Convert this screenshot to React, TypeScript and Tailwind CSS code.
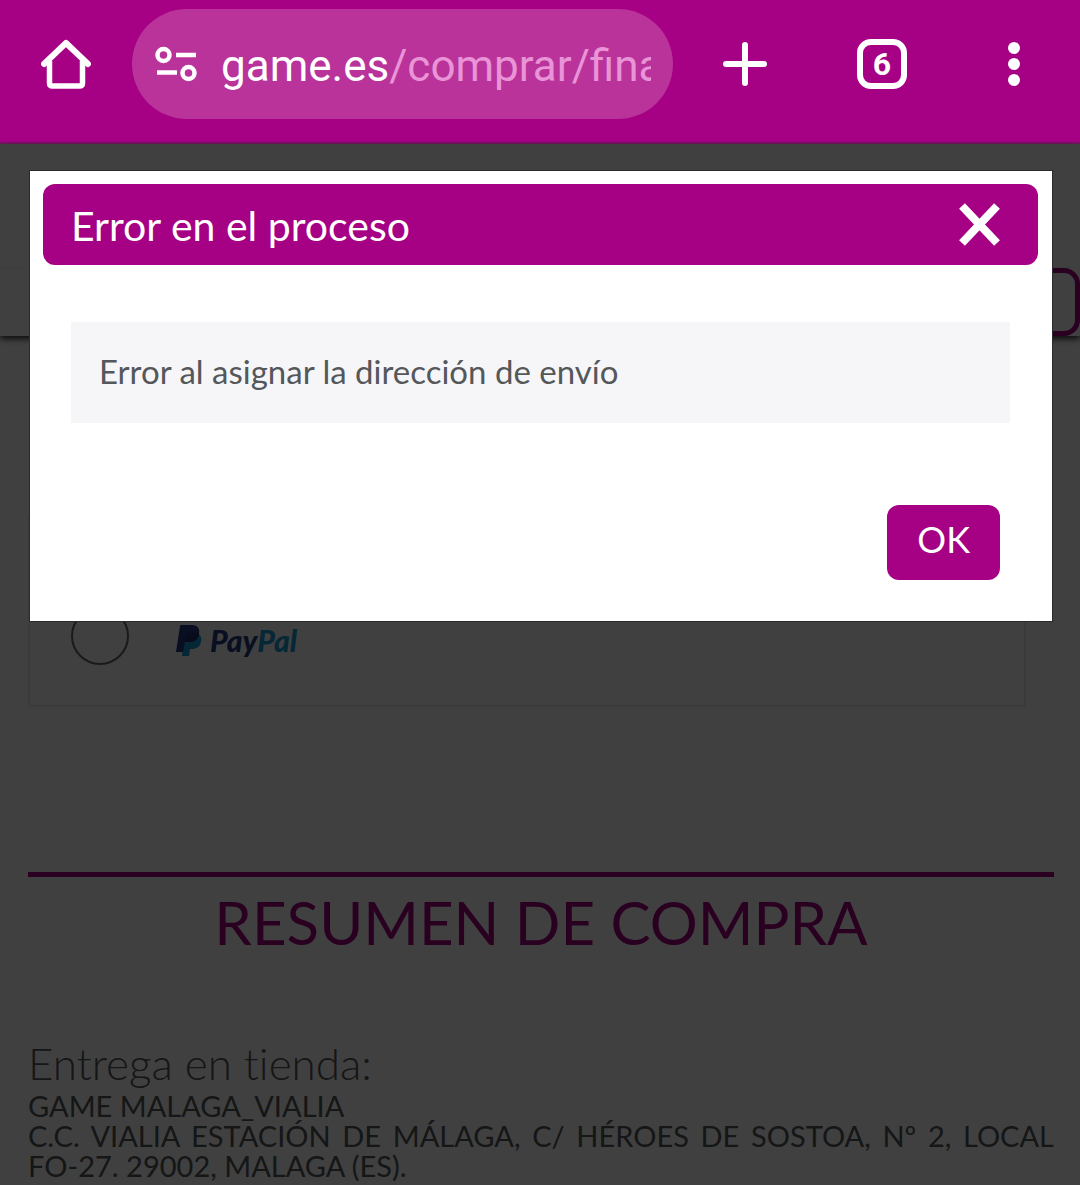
import React from 'react'

type IconButtonProps = {
    label: string;
    className?: string;
    children: React.ReactNode;
}

const IconButton = ({ label, className = '', children }: IconButtonProps) => {
    return (
        <button type="button" aria-label={label} className={`flex shrink-0 items-center justify-center ${className}`}>
            {children}
        </button>
    )
}

const HomeIcon = () => (
    <svg width="50" height="50" viewBox="0 0 50 50" fill="none" stroke="currentColor" strokeLinejoin="round">
        <path d="M3 25 25 4l22 21" strokeWidth="6" strokeLinecap="round" />
        <path d="M8.5 22v22q0 3 3 3h27q3 0 3-3V22" strokeWidth="5.5" />
    </svg>
)

const SiteInfoIcon = () => (
    <svg width="42" height="36" viewBox="0 0 42 36" fill="none" stroke="currentColor" strokeWidth="4.5">
        <circle cx="8.5" cy="9" r="6" />
        <path d="M21 9h20M2 26.5h20" />
        <circle cx="33.5" cy="27" r="6" />
    </svg>
)

const PlusIcon = () => (
    <svg width="44" height="44" viewBox="0 0 44 44" stroke="currentColor" strokeWidth="6" strokeLinecap="round">
        <path d="M22 3v38M3 22h38" />
    </svg>
)

const MenuIcon = () => (
    <svg width="12" height="44" viewBox="0 0 12 44" fill="currentColor">
        <circle cx="6" cy="6" r="6" />
        <circle cx="6" cy="22" r="6" />
        <circle cx="6" cy="38" r="6" />
    </svg>
)

const CloseIcon = () => (
    <svg width="42" height="44" viewBox="0 0 42 44" stroke="currentColor" strokeWidth="8">
        <path d="M4 3l35 37M39 3 4 40" />
    </svg>
)

const BrowserBar = () => {
    return (
        <header className="flex h-36 items-start border-b-2 border-[#7a1466] bg-[#a60084] pt-[9px] text-white">
            <IconButton label="Inicio" className="h-[110px] w-[132px]">
                <HomeIcon />
            </IconButton>
            <button type="button" className="flex h-[110px] min-w-0 flex-1 items-center gap-6 rounded-full bg-[#b9339a] pr-[22px] pl-[23px]">
                <SiteInfoIcon />
                <span className="min-w-0 flex-1 overflow-hidden pt-1 text-left font-[Roboto,sans-serif] text-[44px] leading-[60px] whitespace-nowrap">
                    game.es<span className="text-[#e994d6]">/comprar/fina</span>
                </span>
            </button>
            <IconButton label="Nueva pestaña" className="h-[110px] w-36">
                <PlusIcon />
            </IconButton>
            <IconButton label="6 pestañas abiertas" className="h-[110px] w-[130px]">
                <span className="flex size-[50px] items-center justify-center rounded-[14px] border-[6px] border-white font-[Roboto,sans-serif] text-[32px] leading-none font-bold">
                    6
                </span>
            </IconButton>
            <IconButton label="Menú" className="h-[110px] w-[133px]">
                <MenuIcon />
            </IconButton>
        </header>
    )
}

const PayPalLogo = () => (
    <span className="flex items-center gap-2 pt-2">
        <svg width="26" height="31" viewBox="0 0 26 31" aria-hidden="true">
            <path d="M9 8h12c4 2 5 5 4 9-1 5-5 7-9 7h-2l-1 7H6z" fill="#179bd7" />
            <path d="M5 0h11c6 0 8 4 7 9-1 6-5 8-10 8H9L7 27H0L4 1q0-1 1-1z" fill="#253b80" />
            <path d="M11 8h10l2 1c-1 6-5 8-10 8H9z" fill="#222d65" />
        </svg>
        <span className="text-[30px] leading-8 font-black italic">
            <span className="text-[#253b80]">Pay</span><span className="text-[#179bd7]">Pal</span>
        </span>
    </span>
)

const Checkout = () => {
    return (
        <main className="text-[#54585a]">
            <div className="h-48 bg-white pt-[123px] shadow-[0_3px_6px_rgba(0,0,0,0.8)]">
                <div className="flex border-t border-[#f4f4f4]">
                    <input
                        type="search"
                        aria-label="Buscar"
                        className="ml-14 h-[68px] flex-1 rounded-2xl border-[5px] border-[#a60084] bg-white px-6 text-[33px]"
                    />
                </div>
            </div>
            <div className="mt-[180px] mr-[54px] ml-7 border-2 border-[#ececec] pt-[89px] pr-10 pb-10 pl-[41px]">
                <label className="flex items-center gap-[47px]">
                    <input
                        type="radio"
                        name="pago"
                        className="size-[58px] appearance-none rounded-full border-2 border-[#666]"
                    />
                    <PayPalLogo />
                </label>
            </div>
            <section className="mt-[165px] mr-[26px] ml-7 border-t-[5px] border-[#a60084]">
                <h2 className="pt-3 text-center text-[60px] leading-[66px] text-[#a60084]">RESUMEN DE COMPRA</h2>
                <h3 className="pt-20 text-[44px] leading-[56px] font-light [font-variant-ligatures:none]">Entrega en tienda:</h3>
                <address className="text-justify text-[29px] leading-[30px] not-italic">
                    GAME MALAGA_VIALIA<br />
                    C.C. VIALIA ESTACIÓN DE MÁLAGA, C/ HÉROES DE SOSTOA, Nº 2, LOCAL FO-27. 29002, MALAGA (ES).
                </address>
            </section>
        </main>
    )
}

const ErrorDialog = () => {
    return (
        <div
            role="dialog"
            aria-modal="true"
            aria-labelledby="error-title"
            className="mt-[26px] mr-[27px] ml-[29px] border border-[#2b2b2b] bg-white pt-[13px] pr-3.5 pb-[41px] pl-[13px]"
        >
            <div className="flex items-center justify-between rounded-xl bg-[#a60084] pr-[38px] pl-7 text-white">
                <h1 id="error-title" className="pt-0.5 text-[41px] leading-[79px]">Error en el proceso</h1>
                <button type="button" aria-label="Cerrar">
                    <CloseIcon />
                </button>
            </div>
            <p className="mx-7 mt-[57px] bg-[#f6f6f9] px-7 pb-0.5 text-[33px] leading-[99px] text-[#54585a]">
                Error al asignar la dirección de envío
            </p>
            <div className="mt-[82px] mr-[38px] flex justify-end">
                <button type="button" className="rounded-xl bg-[#a60084] px-[30px] pb-1.5 text-[36px] leading-[69px] text-white">
                    OK
                </button>
            </div>
        </div>
    )
}

const App = () => {
    return (
        <div className="flex min-h-screen flex-col bg-white font-[Lato,sans-serif]">
            <BrowserBar />
            <div className="relative flex-1">
                <Checkout />
                <div className="absolute inset-0 bg-black/75">
                    <ErrorDialog />
                </div>
            </div>
        </div>
    )
}

export default App
